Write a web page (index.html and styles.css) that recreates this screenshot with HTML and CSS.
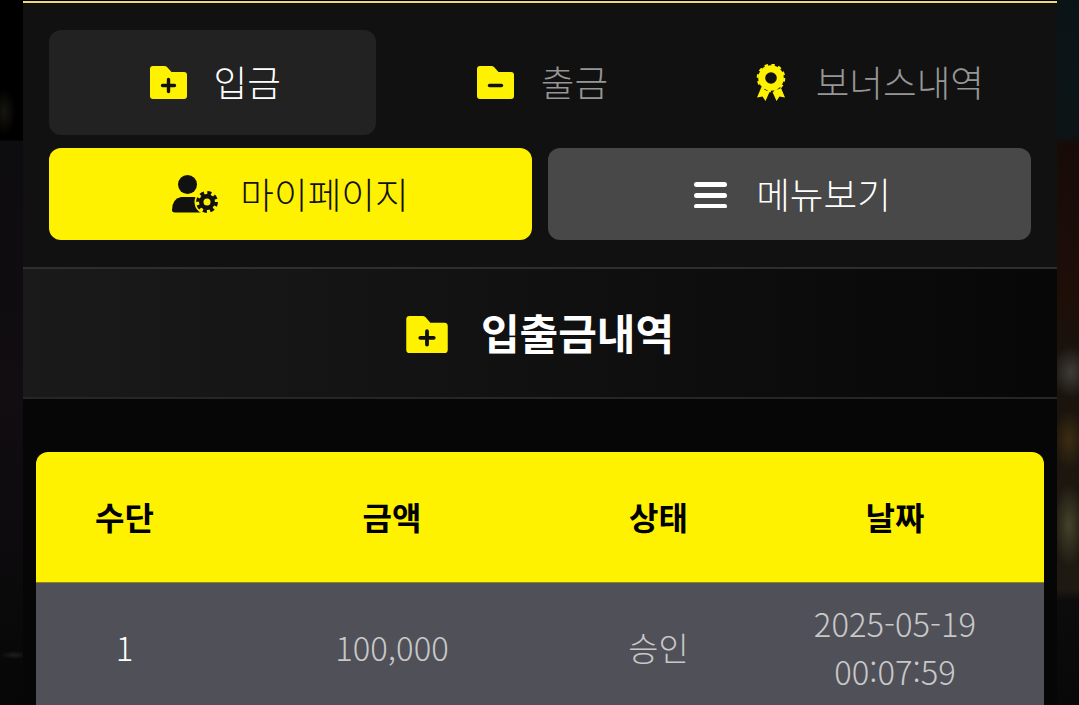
FILE: index.html
```html
<!DOCTYPE html>
<html lang="ko">
<head>
<meta charset="utf-8">
<title>입출금내역</title>
<link rel="stylesheet" href="styles.css">
</head>
<body>
<div class="side side-left"></div>
<main class="panel">
  <section class="menu">
    <nav class="tabs">
      <a class="tab tab-active">
        <svg class="ico-folder" viewBox="0 0 37 33"><path class="y" d="M3 0H14.5Q16 0 17 1L21.5 6H34Q37 6 37 9V30Q37 33 34 33H3Q0 33 0 30V3Q0 0 3 0Z"/><path class="plus" d="M18.500 13.500V25.500M12.500 19.500H24.500"/></svg>
        <span>입금</span>
      </a>
      <a class="tab">
        <svg class="ico-folder" viewBox="0 0 37 33"><path class="y" d="M3 0H14.5Q16 0 17 1L21.5 6H34Q37 6 37 9V30Q37 33 34 33H3Q0 33 0 30V3Q0 0 3 0Z"/><path class="plus" d="M12.500 19.500H24.500"/></svg>
        <span>출금</span>
      </a>
      <a class="tab tab-bonus">
        <svg class="ico-award" viewBox="0 0 30 37"><path class="y" d="M5 24L1 33.500L6.500 32.500L9.500 37L13.500 28ZM25 24L29 33.500L23.500 32.500L20.500 37L16.500 28Z"/><circle class="y" cx="15" cy="14" r="12.800"/><circle class="scallop" cx="15" cy="14" r="13.300"/><circle class="d2" cx="15" cy="14" r="5.800"/></svg>
        <span>보너스내역</span>
      </a>
    </nav>
    <div class="buttons">
      <a class="btn btn-yellow">
        <svg class="ico-user" viewBox="0 0 46 38"><circle class="d" cx="15.500" cy="9.500" r="9.500"/><path class="d" d="M9 22H22Q26 22 29 25V37.500H3Q0 37.500 0 35Q0 24 9 22Z"/><circle class="y" cx="35" cy="27" r="12.500"/><circle class="d" cx="35" cy="27" r="8"/><circle class="teeth" cx="35" cy="27" r="9.200"/><circle class="y" cx="35" cy="27" r="3.500"/></svg>
        <span>마이페이지</span>
      </a>
      <a class="btn btn-gray">
        <svg class="ico-menu" viewBox="0 0 33 28"><rect class="w" y="2" width="33" height="5" rx="2.500"/><rect class="w" y="13" width="33" height="5" rx="2.500"/><rect class="w" y="24" width="33" height="4.500" rx="2.250"/></svg>
        <span>메뉴보기</span>
      </a>
    </div>
  </section>
  <h1 class="title">
    <svg class="ico-title" viewBox="0 0 37 33"><path class="y" d="M3 0H14.5Q16 0 17 1L21.5 6H34Q37 6 37 9V30Q37 33 34 33H3Q0 33 0 30V3Q0 0 3 0Z"/><path class="plus" d="M18.500 13.500V25.500M12.500 19.500H24.500"/></svg>
    <span>입출금내역</span>
  </h1>
  <div class="content">
    <table class="history">
      <thead>
        <tr><th class="c1">수단</th><th class="c2">금액</th><th class="c3">상태</th><th class="c4">날짜</th></tr>
      </thead>
      <tbody>
        <tr><td class="num">1</td><td>100,000</td><td>승인</td><td>2025-05-19<br>00:07:59</td></tr>
      </tbody>
    </table>
  </div>
</main>
<div class="side side-right"></div>
</body>
</html>
```

FILE: styles.css
```css
* { box-sizing: border-box; }
html, body { height: 100%; }
body {
  margin: 0;
  height: 705px;
  overflow: hidden;
  display: flex;
  background: #000;
  font-family: "Noto Sans CJK KR", "Noto Sans", sans-serif;
}
.side { width: 23px; flex: none; }
.side-left {
  background:
    radial-gradient(ellipse 14px 4px at 14px 655px, #1e1e1e 0%, transparent 100%),
    radial-gradient(ellipse 12px 24px at 4px 112px, #161510 0%, transparent 100%),
    linear-gradient(#000 0, #000 140px, #0d0c0e 141px, #110d11 400px, #0b0a0b 600px, #060606 100%);
}
.side-right {
  width: 22px;
  background:
    radial-gradient(ellipse 16px 42px at 12px 525px, #44422a 0%, transparent 100%),
    radial-gradient(ellipse 16px 30px at 12px 440px, #3c2c12 0%, transparent 100%),
    radial-gradient(ellipse 20px 26px at 14px 372px, #3e3c38 0%, transparent 100%),
    linear-gradient(#0a1416 0, #0c1416 135px, #170b08 145px, #1e0e08 300px, #1a120c 345px, #1e1a12 590px, #0c0c0c 600px, #080808 100%);
}
.panel {
  flex: 1;
  min-width: 0;
  margin-top: 1px;
  border-top: 2px solid #efd97a;
  background: #060606;
}
.menu {
  padding: 27px 26px 27px;
  background: #111;
}
.tabs {
  display: grid;
  grid-template-columns: repeat(3, 1fr);
  height: 105px;
}
.tab {
  display: flex;
  align-items: center;
  justify-content: center;
  gap: 27px;
  padding-left: 5px;
  border-radius: 12px;
  color: #969696;
  font-size: 36.600px;
  font-weight: 300;
  line-height: 1;
}
.tab-bonus { gap: 30px; }
.tab-active { background: #222; color: #fff; }
.buttons {
  display: grid;
  grid-template-columns: 1fr 1fr;
  gap: 16px;
  height: 92px;
  margin-top: 13px;
}
.btn {
  display: flex;
  align-items: center;
  justify-content: center;
  border-radius: 12px;
  font-size: 36.600px;
  font-weight: 300;
  line-height: 1;
}
.btn span { margin-top: 1px; }
.btn-yellow { background: #fff200; color: #111; gap: 22px; }
.btn-gray { padding-left: 6px; background: #484848; color: #fff; gap: 29px; }
.title {
  display: flex;
  align-items: center;
  justify-content: center;
  gap: 33px;
  height: 132px;
  margin: 0;
  border-top: 2px solid #2e2e2e;
  border-bottom: 2px solid #262626;
  background: linear-gradient(90deg, #1a1a1a, #070707);
  color: #fff;
  font-size: 42px;
  font-weight: 700;
  line-height: 1;
}
.title span { margin-bottom: 3px; }
.content { padding: 53px 13px 0 13px; }
.history {
  width: 100%;
  table-layout: fixed;
  border-collapse: separate;
  border-spacing: 0;
}
.history th {
  height: 131px;
  padding: 0 0 2px;
  background: #fff200;
  border-bottom: 1px solid #8c8620;
  color: #000;
  font-size: 32px;
  font-weight: 700;
}
.history th.c1 { width: 177px; border-top-left-radius: 12px; }
.history th.c2 { width: 358px; }
.history th.c3 { width: 175px; }
.history th.c4 { width: 298px; border-top-right-radius: 12px; }
.history td {
  height: 132px;
  padding: 0 0 5px;
  background: #505058;
  color: #c8c8c8;
  font-size: 32.800px;
  font-weight: 300;
  line-height: 48px;
  text-align: center;
}
.history td.num { color: #fff; }
.y { fill: #fff200; }
.d, .d2 { fill: #111; }
.w { fill: #fff; }
.plus { fill: none; stroke: #111; stroke-width: 3.400; stroke-linecap: round; }
.teeth { fill: none; stroke: #111; stroke-width: 3.500; stroke-dasharray: 4 3.230; }
.scallop { fill: none; stroke: #fff200; stroke-width: 2; stroke-dasharray: 3.500 3.460; }
.ico-folder { width: 37px; height: 33px; flex: none; }
.ico-award { width: 30px; height: 37px; flex: none; }
.ico-user { width: 46px; height: 38px; flex: none; }
.ico-menu { width: 33px; height: 28px; flex: none; }
.ico-title { width: 42px; height: 37px; flex: none; margin-top: 3px; }
```
